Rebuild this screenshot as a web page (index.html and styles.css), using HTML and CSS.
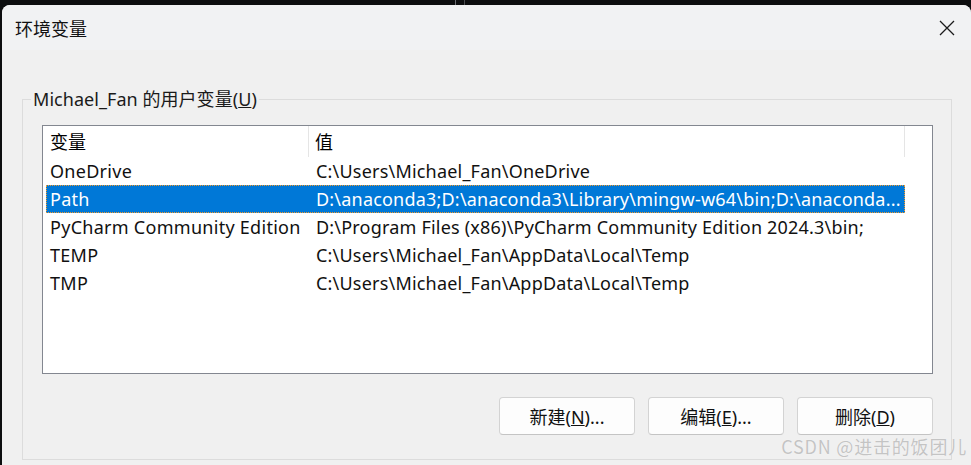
FILE: index.html
```html
<!DOCTYPE html>
<html lang="zh-CN">
<head>
<meta charset="utf-8">
<title>环境变量</title>
<link rel="stylesheet" href="styles.css">
</head>
<body>
<div class="desktop-deco">
  <span class="deco-line deco-a"></span>
  <span class="deco-line deco-b"></span>
</div>
<div class="window">
  <div class="titlebar">
    <span class="title">环境变量</span>
    <button class="close" aria-label="关闭">
      <svg width="16" height="16" viewBox="0 0 16 16"><path d="M1 1 L15 15 M15 1 L1 15" stroke="#1b1b1b" stroke-width="1.3" fill="none"/></svg>
    </button>
  </div>
  <div class="content">
    <fieldset class="group">
      <legend class="group-label">Michael_Fan 的用户变量(<u>U</u>)</legend>
      <div class="listbox">
        <div class="list-header">
          <div class="hcell hcell-name">变量</div>
          <div class="hcell hcell-value">值</div>
        </div>
        <div class="row"><div class="cell cell-name">OneDrive</div><div class="cell cell-value">C:\Users\Michael_Fan\OneDrive</div></div>
        <div class="row selected"><div class="cell cell-name">Path</div><div class="cell cell-value">D:\anaconda3;D:\anaconda3\Library\mingw-w64\bin;D:\anaconda...</div></div>
        <div class="row"><div class="cell cell-name">PyCharm Community Edition</div><div class="cell cell-value">D:\Program Files (x86)\PyCharm Community Edition 2024.3\bin;</div></div>
        <div class="row"><div class="cell cell-name">TEMP</div><div class="cell cell-value">C:\Users\Michael_Fan\AppData\Local\Temp</div></div>
        <div class="row"><div class="cell cell-name">TMP</div><div class="cell cell-value">C:\Users\Michael_Fan\AppData\Local\Temp</div></div>
      </div>
      <div class="buttons">
        <button class="btn">新建(<u>N</u>)...</button>
        <button class="btn">编辑(<u>E</u>)...</button>
        <button class="btn">删除(<u>D</u>)</button>
      </div>
    </fieldset>
  </div>
  <div class="watermark">CSDN @进击的饭团儿</div>
</div>
</body>
</html>
```

FILE: styles.css
```css
* { box-sizing: border-box; }

html, body {
  margin: 0;
  padding: 0;
  width: 971px;
  height: 465px;
  overflow: hidden;
  background: #0d0e0f;
  font-family: "Noto Sans", "Noto Sans CJK SC", sans-serif;
  font-size: 18px;
  color: #000;
}

body { position: relative; }

.desktop-deco { position: absolute; inset: 0; pointer-events: none; }
.deco-line { position: absolute; top: 0; height: 5px; background: #6b6e72; }
.deco-a { left: 455px; width: 1px; }
.deco-b { left: 464px; width: 1px; background: #4a4c4f; }

.window {
  position: relative;
  margin: 5px 0 0 2px;
  width: 969px;
  height: 460px;
  background: #f0f0f0;
  border-radius: 8px 8px 0 0;
  overflow: hidden;
}

.titlebar {
  height: 45px;
  background: #f1f2f3;
  display: flex;
  align-items: center;
  justify-content: space-between;
  padding: 0 14px 0 13px;
}

.title {
  font-family: "Noto Sans CJK SC", sans-serif;
  font-size: 18px;
  line-height: 24px;
  color: #111;
}

.close {
  border: 0;
  background: transparent;
  padding: 0;
  width: 20px;
  height: 20px;
  display: flex;
  align-items: center;
  justify-content: center;
}

.content {
  padding: 37px 19px 0 20px;
}

.group {
  margin: 0;
  border: 1px solid #dcdcdc;
  padding: 14px 18px 24px 19px;
  min-width: 0;
}

.group-label {
  margin-left: -11px;
  padding: 0 2px;
  line-height: 24px;
  color: #1a1a1a;
  letter-spacing: 0.05px;
}

.listbox {
  height: 249px;
  background: #fff;
  border: 1px solid #838790;
  overflow: hidden;
}

.list-header {
  display: flex;
  height: 31px;
  width: 862px;
}

.hcell {
  line-height: 31px;
  white-space: nowrap;
  font-family: "Noto Sans CJK SC", sans-serif;
}

.hcell-name {
  width: 266px;
  padding-left: 7px;
  border-right: 1px solid #e5e5e5;
}

.hcell-value {
  width: 596px;
  padding-left: 6px;
  border-right: 1px solid #e5e5e5;
}

.row {
  display: flex;
  height: 28px;
  margin-left: 3px;
  width: 859px;
  line-height: 28px;
  white-space: nowrap;
  color: #111;
  letter-spacing: 0.28px;
}

.cell { overflow: hidden; }

.cell-name {
  width: 263px;
  padding-left: 4px;
}

.cell-value {
  flex: 1;
  padding-left: 7px;
  letter-spacing: 0.2px;
}

.row.selected {
  background: #0078d7;
  color: #fff;
  outline: 1px dotted #f39a2a;
  outline-offset: -1px;
}

.buttons {
  display: flex;
  justify-content: flex-end;
  gap: 13px;
  margin-top: 23px;
}

.btn {
  width: 136px;
  height: 38px;
  background: #fdfdfd;
  border: 1px solid #d3d3d3;
  border-bottom-color: #c4c4c4;
  border-radius: 4px;
  font-family: "Noto Sans", "Noto Sans CJK SC", sans-serif;
  font-size: 18px;
  color: #111;
  padding: 0;
}

.watermark {
  position: absolute;
  right: 4px;
  bottom: 6px;
  font-family: "Noto Sans CJK SC", sans-serif;
  font-size: 18px;
  color: #c4c4c4;
  text-shadow: 0 0 1px #fff;
  letter-spacing: 0.8px;
}
```
